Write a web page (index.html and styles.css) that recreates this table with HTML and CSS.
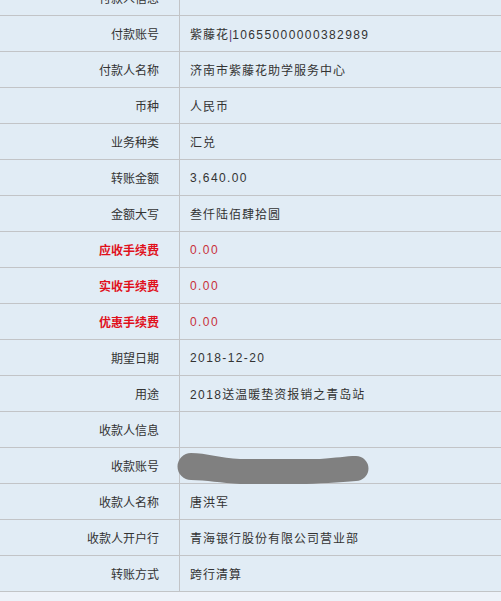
FILE: index.html
```html
<!DOCTYPE html>
<html>
  <head>
    <meta charset="utf-8">
    <title>转账详情</title>
    <link rel="stylesheet" href="styles.css">
  </head>
  <body>
    <div class="detail">
      <table class="detail-table">
        <tr><td class="label">付款人信息</td><td class="value"></td></tr>
        <tr><td class="label">付款账号</td><td class="value">紫藤花<span class="sep">|</span><span class="num">10655000000382989</span></td></tr>
        <tr><td class="label">付款人名称</td><td class="value">济南市紫藤花助学服务中心</td></tr>
        <tr><td class="label">币种</td><td class="value">人民币</td></tr>
        <tr><td class="label">业务种类</td><td class="value">汇兑</td></tr>
        <tr><td class="label">转账金额</td><td class="value num">3,640.00</td></tr>
        <tr><td class="label">金额大写</td><td class="value">叁仟陆佰肆拾圆</td></tr>
        <tr><td class="label fee">应收手续费</td><td class="value num fee-value">0.00</td></tr>
        <tr><td class="label fee">实收手续费</td><td class="value num fee-value">0.00</td></tr>
        <tr><td class="label fee">优惠手续费</td><td class="value num fee-value">0.00</td></tr>
        <tr><td class="label">期望日期</td><td class="value num">2018-12-20</td></tr>
        <tr><td class="label">用途</td><td class="value"><span class="num">2018</span>送温暖垫资报销之青岛站</td></tr>
        <tr><td class="label">收款人信息</td><td class="value"></td></tr>
        <tr>
          <td class="label">收款账号</td>
          <td class="value masked">
            <!-- account number scribbled out -->
            <svg class="scribble" width="200" height="40" viewBox="0 0 200 40">
              <path d="M15 5 C30 5 45 10 64 11 L144 11 C160 10 170 8 180 8 A12.5 12.5 0 0 1 180 33 C165 34 140 36 124 36 L64 36 C45 35 30 32 15 32 A13.5 13.5 0 0 1 15 5 Z" fill="#808080"/>
            </svg>
          </td>
        </tr>
        <tr><td class="label">收款人名称</td><td class="value">唐洪军</td></tr>
        <tr><td class="label">收款人开户行</td><td class="value">青海银行股份有限公司营业部</td></tr>
        <tr><td class="label">转账方式</td><td class="value">跨行清算</td></tr>
      </table>
    </div>
  </body>
</html>
```

FILE: styles.css
```css
body {
  margin: 0;
  padding: 0;
  background-color: #edf2f9;
  font-family: "Liberation Sans", "Noto Sans CJK SC", sans-serif;
  font-size: 12px;
  color: #333;
}
.detail {
  overflow: hidden;
}
.detail-table {
  width: 100%;
  margin-top: -20px;
  border-collapse: collapse;
  background-color: #e1ecf5;
}
.detail-table td {
  height: 35px;
  padding: 0;
  border-bottom: 1px solid #c2c4c7;
}
.label {
  width: 159px;
  padding-right: 20px !important;
  text-align: right;
  border-right: 1px solid #c2c4c7;
}
.value {
  padding-left: 10px !important;
  letter-spacing: 1px;
}
.num {
  letter-spacing: 1.4px;
}
.sep {
  color: #5a3a7a;
  letter-spacing: 0;
}
.fee {
  color: #e0101c;
  font-weight: bold;
}
.fee-value {
  color: #c8303a;
}
.masked {
  position: relative;
}
.scribble {
  position: absolute;
  left: -4px;
  top: 0;
}
```
